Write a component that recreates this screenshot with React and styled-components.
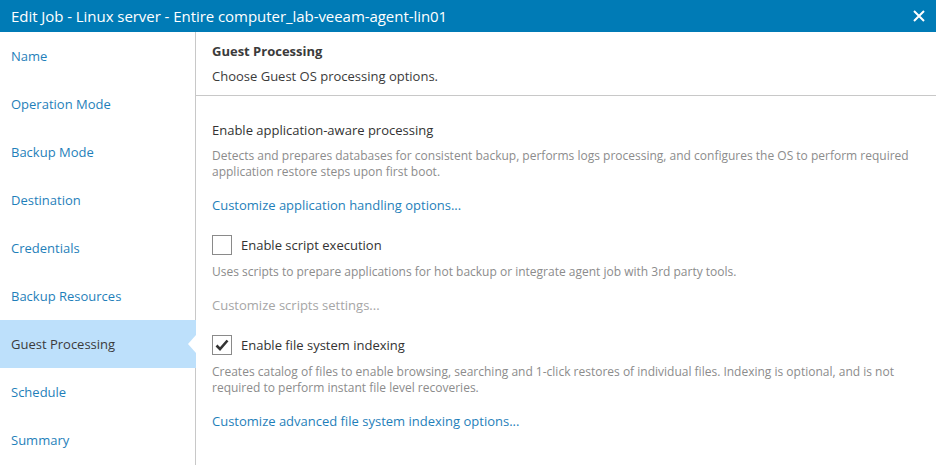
import React, { useState } from "react";
import styled, { createGlobalStyle } from "styled-components";

const GlobalStyle = createGlobalStyle`
  html, body {
    margin: 0;
    padding: 0;
    background: #ffffff;
    font-family: "Open Sans", "DejaVu Sans", sans-serif;
  }
`;

const steps = [
  "Name",
  "Operation Mode",
  "Backup Mode",
  "Destination",
  "Credentials",
  "Backup Resources",
  "Guest Processing",
  "Schedule",
  "Summary",
];

export default function App() {
  const [active, setActive] = useState("Guest Processing");
  const [scripts, setScripts] = useState(false);
  const [indexing, setIndexing] = useState(true);

  return (
    <>
      <GlobalStyle />
      <Window>
        <TitleBar>
          <Title>Edit Job - Linux server - Entire computer_lab-veeam-agent-lin01</Title>
          <CloseButton aria-label="Close">
            <svg width="12" height="12" viewBox="0 0 12 12">
              <path d="M1 1 L11 11 M11 1 L1 11" stroke="#fff" strokeWidth="2" />
            </svg>
          </CloseButton>
        </TitleBar>

        <Body>
          <Sidebar>
            {steps.map((s) => (
              <NavItem key={s} $active={s === active} onClick={() => setActive(s)}>
                {s}
              </NavItem>
            ))}
          </Sidebar>

          <Content>
            <PageHeader>
              <PageTitle>Guest Processing</PageTitle>
              <PageSubtitle>Choose Guest OS processing options.</PageSubtitle>
            </PageHeader>

            <Options>
              <Label>Enable application-aware processing</Label>
              <Description>
                Detects and prepares databases for consistent backup, performs logs processing, and configures the OS to perform required
                <br />
                application restore steps upon first boot.
              </Description>
              <Link>Customize application handling options...</Link>

              <CheckRow onClick={() => setScripts(!scripts)}>
                <Box>{scripts && <Tick />}</Box>
                <Label>Enable script execution</Label>
              </CheckRow>
              <Description>
                Uses scripts to prepare applications for hot backup or integrate agent job with 3rd party tools.
              </Description>
              <Link $disabled={!scripts}>Customize scripts settings...</Link>

              <CheckRow onClick={() => setIndexing(!indexing)}>
                <Box>{indexing && <Tick />}</Box>
                <Label>Enable file system indexing</Label>
              </CheckRow>
              <Description>
                Creates catalog of files to enable browsing, searching and 1-click restores of individual files. Indexing is optional, and is not
                <br />
                required to perform instant file level recoveries.
              </Description>
              <Link $disabled={!indexing}>Customize advanced file system indexing options...</Link>
            </Options>
          </Content>
        </Body>
      </Window>
    </>
  );
}

function Tick() {
  return (
    <svg width="14" height="12" viewBox="0 0 14 12">
      <path d="M1.5 6.5 L5 10 L12.5 1.5" fill="none" stroke="#333" strokeWidth="2.6" />
    </svg>
  );
}

const Window = styled.div`
  width: 936px;
  height: 465px;
  display: flex;
  flex-direction: column;
  overflow: hidden;
`;

const TitleBar = styled.div`
  height: 32px;
  flex: 0 0 32px;
  background: #007bb6;
  display: flex;
  align-items: center;
  justify-content: space-between;
  padding: 0 9px 0 11px;
`;

const Title = styled.div`
  color: #ffffff;
  font-size: 15px;
  letter-spacing: -0.05px;
`;

const CloseButton = styled.div`
  width: 16px;
  height: 16px;
  display: flex;
  align-items: center;
  justify-content: center;
  cursor: pointer;
`;

const Body = styled.div`
  flex: 1;
  display: flex;
`;

const Sidebar = styled.div`
  width: 195px;
  flex: 0 0 195px;
  border-right: 1px solid #c8c8c8;
  display: flex;
  flex-direction: column;
`;

const NavItem = styled.div`
  position: relative;
  height: 48px;
  display: flex;
  align-items: center;
  padding-left: 11px;
  font-size: 13px;
  cursor: pointer;
  color: ${(p) => (p.$active ? "#3b3b3b" : "#1f7fba")};
  background: ${(p) => (p.$active ? "#bde0fb" : "transparent")};
  margin-right: ${(p) => (p.$active ? "-1px" : "0")};

  &::after {
    content: "";
    display: ${(p) => (p.$active ? "block" : "none")};
    position: absolute;
    right: 0;
    top: 15px;
    width: 0;
    height: 0;
    border-top: 9px solid transparent;
    border-bottom: 9px solid transparent;
    border-right: 8px solid #ffffff;
  }
`;

const Content = styled.div`
  flex: 1;
  display: flex;
  flex-direction: column;
`;

const PageHeader = styled.div`
  height: 64px;
  box-sizing: border-box;
  border-bottom: 1px solid #c8c8c8;
  padding: 10px 16px 0;
`;

const PageTitle = styled.div`
  font-size: 13px;
  font-weight: 700;
  color: #3b3b3b;
  line-height: 18px;
`;

const PageSubtitle = styled.div`
  font-size: 13px;
  color: #3b3b3b;
  line-height: 18px;
  margin-top: 7px;
`;

const Options = styled.div`
  padding: 25px 16px 0;
  display: flex;
  flex-direction: column;
  align-items: flex-start;
`;

const Label = styled.div`
  font-size: 13px;
  color: #333333;
  line-height: 18px;
`;

const Description = styled.div`
  font-size: 12px;
  color: #8c8c8c;
  line-height: 16px;
  margin-top: 9px;
  white-space: nowrap;
`;

const Link = styled.div`
  font-size: 13px;
  line-height: 18px;
  margin-top: 16px;
  cursor: ${(p) => (p.$disabled ? "default" : "pointer")};
  color: ${(p) => (p.$disabled ? "#a6a6a6" : "#1f7fba")};
`;

const CheckRow = styled.div`
  display: flex;
  align-items: center;
  gap: 9px;
  margin-top: 21px;
  cursor: pointer;
`;

const Box = styled.div`
  width: 18px;
  height: 18px;
  border: 1px solid #8a8a8a;
  display: flex;
  align-items: center;
  justify-content: center;
`;
